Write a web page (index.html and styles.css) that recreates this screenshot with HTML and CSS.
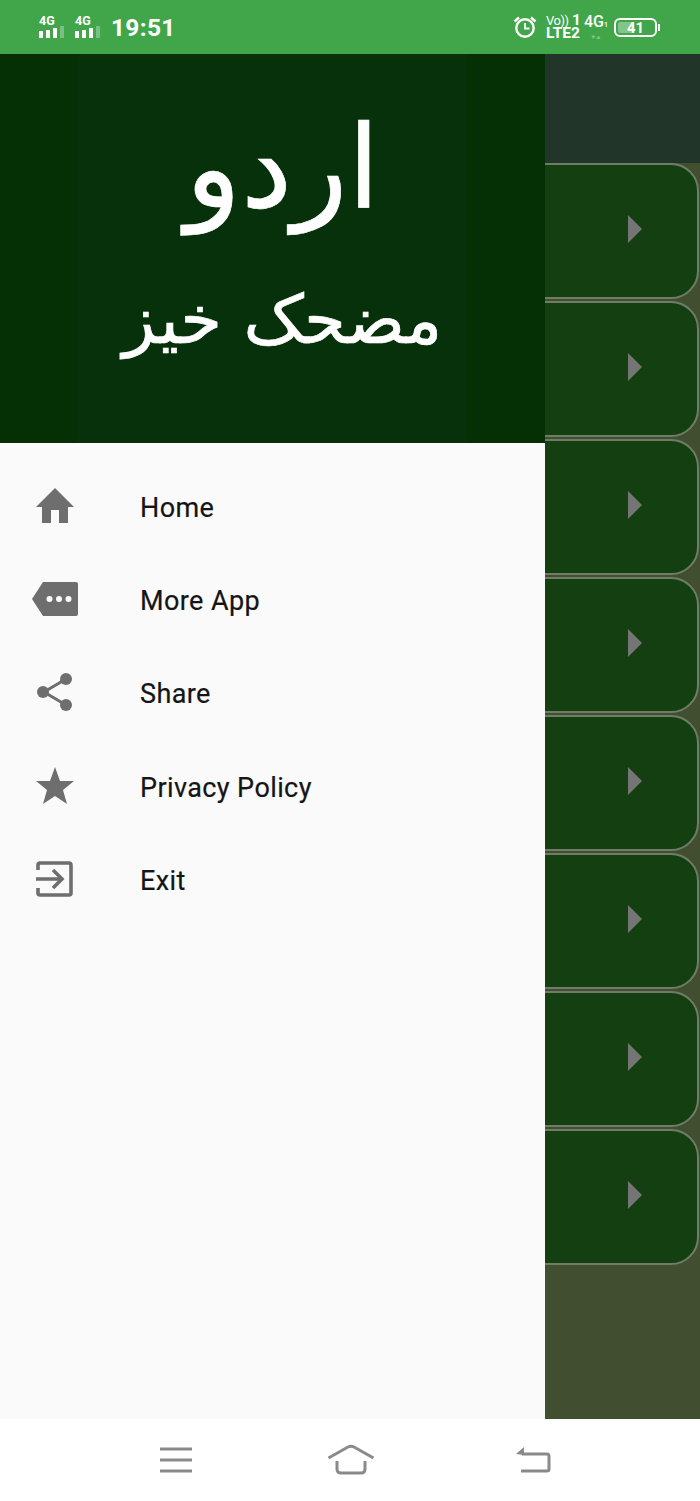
FILE: index.html
```html
<!DOCTYPE html>
<html lang="ur">
<head>
  <meta charset="UTF-8">
  <meta name="viewport" content="width=device-width, initial-scale=1.0">
  <title>Urdu</title>
  <link rel="stylesheet" href="styles.css">
</head>
<body>
  <div class="statusBar">
    <div class="statusLeft">
      <div class="signal">
        <span class="signalText">4G</span>
        <div class="bars"><i></i><i></i><i></i><i class="dim"></i></div>
      </div>
      <div class="signal">
        <span class="signalText">4G</span>
        <div class="bars"><i></i><i></i><i></i><i class="dim"></i></div>
      </div>
      <span class="clock">19:51</span>
    </div>
    <div class="statusRight">
      <svg class="alarm" width="24" height="24" viewBox="0 0 24 24" fill="none" stroke="#fff">
        <circle cx="12" cy="13" r="8.7" stroke-width="2.4"/>
        <path d="M12 8v5.5h4.5" stroke-width="1.8"/>
        <path d="M1.500 6.500 6 2.500M22.500 6.500 18 2.500" stroke-width="2.4"/>
      </svg>
      <div class="simText">
        <div class="simRow"><span class="volte">Vo))</span><span>1</span></div>
        <div class="simRow"><span>LTE2</span></div>
      </div>
      <div class="netType">
        <span class="netLabel">4G<small>1</small></span>
        <span class="netArrows">▾▴</span>
      </div>
      <div class="battery">
        <div class="batteryBody"><div class="batteryFill" style="width: 41%"></div><span>41</span></div>
        <div class="batteryTip"></div>
      </div>
    </div>
  </div>

  <div class="screen">
    <div class="backList">
      <div class="toolbar"></div>
      <div class="cards">
        <div class="card"><div class="arrow"></div></div>
        <div class="card"><div class="arrow"></div></div>
        <div class="card"><div class="arrow"></div></div>
        <div class="card"><div class="arrow"></div></div>
        <div class="card"><div class="arrow"></div></div>
        <div class="card"><div class="arrow"></div></div>
        <div class="card"><div class="arrow"></div></div>
        <div class="card"><div class="arrow"></div></div>
      </div>
    </div>

    <div class="drawer">
      <div class="drawerHead">
        <div class="titleBig" dir="rtl">اردو</div>
        <div class="titleSmall" dir="rtl">مضحک خیز</div>
      </div>
      <ul class="menu">
        <li>
          <span class="menuIcon">
            <svg width="40" height="36" viewBox="0 0 40 36"><path d="M20 0 39 19H33V35H24V22H16V35H7V19H1Z" fill="#6e6e6e"/></svg>
          </span>
          Home
        </li>
        <li>
          <span class="menuIcon">
            <svg width="48" height="36" viewBox="0 0 48 36"><path d="M12 1H45Q47 1 47 3V33Q47 35 45 35H12L1 18Z" fill="#6e6e6e"/><circle cx="18.500" cy="18" r="3" fill="#fafafa"/><circle cx="28" cy="18" r="3" fill="#fafafa"/><circle cx="37.500" cy="18" r="3" fill="#fafafa"/></svg>
          </span>
          More App
        </li>
        <li>
          <span class="menuIcon">
            <svg width="38" height="40" viewBox="0 0 38 40"><path d="M30 7 8 20 30 33" fill="none" stroke="#6e6e6e" stroke-width="3"/><circle cx="30" cy="7" r="6" fill="#6e6e6e"/><circle cx="7" cy="20" r="6" fill="#6e6e6e"/><circle cx="30" cy="33" r="6" fill="#6e6e6e"/></svg>
          </span>
          Share
        </li>
        <li>
          <span class="menuIcon">
            <svg width="40" height="40" viewBox="0 0 40 40"><path d="M20 1 25 15H39L28 24 32 38 20 30 8 38 12 24 1 15H15Z" fill="#6e6e6e"/></svg>
          </span>
          Privacy Policy
        </li>
        <li>
          <span class="menuIcon">
            <svg width="38" height="36" viewBox="0 0 38 36" fill="none" stroke="#6e6e6e" stroke-width="3.600"><path d="M2 9V4Q2 2 4 2H33Q35 2 35 4V32Q35 34 33 34H4Q2 34 2 32V27"/><path d="M0 18H25M17 9l9 9-9 9"/></svg>
          </span>
          Exit
        </li>
      </ul>
    </div>
  </div>

  <div class="navBar">
    <svg width="36" height="28" viewBox="0 0 36 28" stroke="#8a8a8a" stroke-width="3" fill="none"><path d="M2 3H34M2 14H34M2 25H34"/></svg>
    <svg class="navHome" width="48" height="32" viewBox="0 0 48 32" stroke="#8a8a8a" stroke-width="3" fill="none"><path d="M1.500 14 21 3Q24 1.500 27 3L46.500 14"/><path d="M10 17V25Q10 29 14 29H34Q38 29 38 25V17"/></svg>
    <svg width="36" height="28" viewBox="0 0 36 28" fill="none"><path d="M7 8H32Q34 8 34 10V23Q34 25 32 25H6" stroke="#8a8a8a" stroke-width="3"/><path d="M1 8 9 1V9Z" fill="#8a8a8a"/></svg>
  </div>
</body>
</html>
```

FILE: styles.css
```css
* {
  box-sizing: border-box;
}

html, body {
  margin: 0;
  padding: 0;
}

body {
  width: 700px;
  height: 1501px;
  overflow: hidden;
  background: #fff;
  font-family: "Roboto", "Liberation Sans", sans-serif;
}

.statusBar {
  height: 54px;
  background: #40a649;
  color: #fff;
  display: flex;
  justify-content: space-between;
  align-items: center;
  padding: 0 40px 0 39px;
}
.statusLeft {
  display: flex;
  align-items: center;
  gap: 7px;
}
.statusRight {
  display: flex;
  align-items: center;
}

.signal {
  width: 29px;
  display: flex;
  flex-direction: column;
  margin-bottom: 2px;
}
.signalText {
  font-size: 12.500px;
  font-weight: 700;
  line-height: 11px;
}
.bars {
  display: flex;
  gap: 3px;
  align-items: flex-end;
  height: 12px;
}
.bars i {
  width: 4px;
  height: 7px;
  background: #fff;
}
.bars i:nth-child(2) {
  height: 8px;
}
.bars i:nth-child(3) {
  height: 10px;
}
.bars i:nth-child(4) {
  height: 12px;
}
.bars i.dim {
  background: rgba(255, 255, 255, 0.3);
}
.clock {
  font-size: 24.500px;
  font-weight: 700;
  letter-spacing: 0.3px;
}

.alarm {
  margin-right: 9px;
}
.simText {
  display: flex;
  flex-direction: column;
  width: 35px;
  margin-right: 3px;
  font-size: 15.500px;
  font-weight: 700;
  line-height: 13px;
  white-space: nowrap;
}
.simRow {
  display: flex;
  justify-content: space-between;
}
.volte {
  font-size: 13px;
  font-weight: 400;
  letter-spacing: -0.5px;
}
.netType {
  display: flex;
  flex-direction: column;
  align-items: center;
  width: 24px;
  margin-right: 6px;
}
.netLabel {
  font-size: 16px;
  font-weight: 500;
  line-height: 18px;
}
.netLabel small {
  font-size: 7px;
}
.netArrows {
  font-size: 8px;
  line-height: 8px;
  opacity: 0.4;
}
.battery {
  display: flex;
  align-items: center;
}
.batteryBody {
  position: relative;
  width: 43px;
  height: 19px;
  border: 2px solid #fff;
  border-radius: 6px;
  padding: 1px;
  text-align: center;
  font-size: 15px;
  font-weight: 700;
  line-height: 14px;
}
.batteryFill {
  position: absolute;
  left: 2px;
  top: 2px;
  bottom: 2px;
  background: rgba(255, 255, 255, 0.35);
  border-radius: 2px;
}
.batteryBody span {
  position: relative;
}
.batteryTip {
  width: 2px;
  height: 7px;
  background: #fff;
  margin-left: 1px;
}

.screen {
  position: relative;
  height: 1365px;
  overflow: hidden;
}
.backList {
  height: 100%;
  background: #414f30;
}
.toolbar {
  height: 109px;
  background: #213629;
}
.cards {
  display: flex;
  flex-direction: column;
  gap: 2px;
  padding-right: 1px;
}
.card {
  height: 136px;
  background: #143f11;
  border: 2px solid #6f7d68;
  border-radius: 28px;
  display: flex;
  align-items: center;
  justify-content: flex-end;
  padding-right: 55px;
}
.arrow {
  width: 0;
  height: 0;
  margin-bottom: 4px;
  border-left: 14px solid #757575;
  border-top: 14px solid transparent;
  border-bottom: 14px solid transparent;
}

.drawer {
  position: absolute;
  left: 0;
  top: 0;
  bottom: 0;
  width: 545px;
  background: #fafafa;
}
.drawerHead {
  height: 389px;
  background: linear-gradient(90deg, #053005 78px, #07310a 78px, #07310a 467px, #053005 467px);
  color: #fff;
  text-align: center;
  font-family: "DejaVu Sans", sans-serif;
  padding-left: 20px;
  -webkit-text-stroke: 0.7px #fff;
}
.titleBig {
  font-size: 115px;
  line-height: 170px;
  padding-top: 28px;
}
.titleSmall {
  font-size: 67.500px;
  line-height: 100px;
  padding-top: 18px;
}

.menu {
  list-style: none;
  margin: 0;
  padding: 17px 0 0;
}
.menu li {
  height: 93.300px;
  display: flex;
  align-items: center;
  padding-top: 2px;
  font-size: 27px;
  color: #151515;
  letter-spacing: 0.4px;
  -webkit-text-stroke: 0.2px #151515;
}
.menuIcon {
  width: 109px;
  margin-right: 31px;
  margin-top: -4px;
  display: flex;
  align-items: center;
  justify-content: center;
}

.navBar {
  height: 82px;
  background: #fff;
  display: flex;
  align-items: center;
  justify-content: space-between;
  padding: 0 149px 0 158px;
}
.navHome {
  margin-right: 8px;
}
```
